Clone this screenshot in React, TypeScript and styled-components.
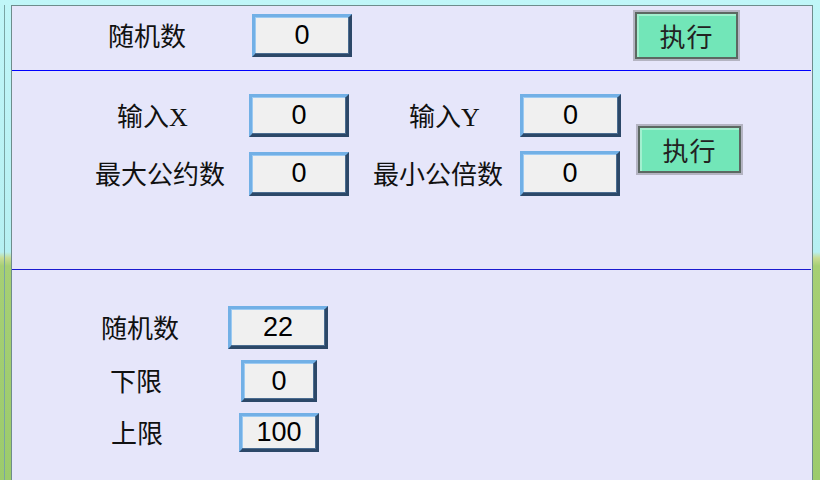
import React from "react";
import styled, { createGlobalStyle } from "styled-components";

const GlobalStyle = createGlobalStyle`
  html, body {
    margin: 0;
    padding: 0;
    overflow: hidden;
  }
  body {
    font-family: "Liberation Serif", "Noto Sans CJK SC", serif;
  }
`;

export default function App() {
  return (
    <>
      <GlobalStyle />
      <Page>
        <Frame>
          <Panel>
            <TopSection>
              <LabelCell $w={240} $pad={96}>随机数</LabelCell>
              <ValueBox $w={100} $h={43}>0</ValueBox>
              <RunButton $left={281}>执行</RunButton>
            </TopSection>
            <Divider $color="#0000ff" />

            <MathSection>
              <Rows>
                <Row>
                  <LabelCell $w={237} $pad={105}>输入X</LabelCell>
                  <ValueBox $w={100} $h={43}>0</ValueBox>
                  <LabelCell $w={171} $pad={60}>输入Y</LabelCell>
                  <ValueBox $w={101} $h={43}>0</ValueBox>
                </Row>
                <Row>
                  <LabelCell $w={237} $pad={83}>最大公约数</LabelCell>
                  <ValueBox $w={100} $h={44}>0</ValueBox>
                  <LabelCell $w={171} $pad={24}>最小公倍数</LabelCell>
                  <ValueBox $w={100} $h={45}>0</ValueBox>
                </Row>
              </Rows>
              <RunButton $left={15} $top={30}>执行</RunButton>
            </MathSection>
            <Divider $color="#1a1ad0" />

            <RangeSection>
              <Row>
                <LabelCell $w={216} $pad={89}>随机数</LabelCell>
                <ValueBox $w={100} $h={43}>22</ValueBox>
              </Row>
              <Row>
                <LabelCell $w={229} $pad={98}>下限</LabelCell>
                <ValueBox $w={76} $h={42}>0</ValueBox>
              </Row>
              <Row>
                <LabelCell $w={227} $pad={99}>上限</LabelCell>
                <ValueBox $w={80} $h={39}>100</ValueBox>
              </Row>
            </RangeSection>
          </Panel>
        </Frame>
      </Page>
    </>
  );
}

const Page = styled.div`
  width: 820px;
  height: 480px;
  box-sizing: border-box;
  padding: 5px 7px 0 4px;
  display: flex;
  background: linear-gradient(
    to bottom,
    #c0f6f8 0,
    #b6f0f2 252px,
    #c8dc94 258px,
    #a6cf74 266px,
    #9ccb6c 480px
  );
`;

const Frame = styled.div`
  flex: 1;
  display: flex;
  border-left: 1px solid #7aa4a4;
  padding-left: 6px;
`;

const Panel = styled.div`
  flex: 1;
  display: flex;
  flex-direction: column;
  background: #e6e6fa;
  border: 1px solid #6e8c8c;
  border-bottom: none;
`;

const TopSection = styled.div`
  height: 64px;
  box-sizing: border-box;
  padding-bottom: 5px;
  display: flex;
  align-items: center;
`;

const MathSection = styled.div`
  height: 198px;
  box-sizing: border-box;
  padding-top: 23px;
  display: flex;
  align-items: flex-start;
`;

const RangeSection = styled.div`
  flex: 1;
  padding-top: 36px;
  display: flex;
  flex-direction: column;
  gap: 11px;
`;

const Rows = styled.div`
  display: flex;
  flex-direction: column;
  gap: 14px;
`;

const Row = styled.div`
  display: flex;
  align-items: center;
`;

const Divider = styled.div<{ $color: string }>`
  height: 1px;
  background: ${({ $color }) => $color};
  margin-right: 1px;
`;

const LabelCell = styled.div<{ $w: number; $pad: number }>`
  width: ${({ $w }) => $w}px;
  padding-left: ${({ $pad }) => $pad}px;
  padding-top: 4px;
  box-sizing: border-box;
  font-size: 26px;
  line-height: 30px;
  color: #111;
  white-space: nowrap;
`;

const ValueBox = styled.div<{ $w: number; $h: number }>`
  width: ${({ $w }) => $w}px;
  height: ${({ $h }) => $h}px;
  box-sizing: border-box;
  display: flex;
  align-items: center;
  justify-content: center;
  background: #f0f0f0;
  border: 3px solid;
  border-color: #72b0e6 #2c4868 #2c4868 #72b0e6;
  box-shadow: inset -1px -1px 0 #4a6c90, inset 1px 1px 0 #9ccaf2;
  font-family: "Liberation Sans", Arial, sans-serif;
  font-size: 27px;
  color: #000;
`;

const RunButton = styled.div<{ $left: number; $top?: number }>`
  width: 107px;
  height: 51px;
  margin-left: ${({ $left }) => $left}px;
  margin-top: ${({ $top }) => $top ?? 0}px;
  box-sizing: border-box;
  display: flex;
  align-items: center;
  justify-content: center;
  background: #72e6b8;
  border: 2px solid #b4b4c2;
  box-shadow: inset 0 0 0 2px #5c6862, inset 1px 1px 0 3px #a2f0cf;
  font-size: 26px;
  color: #222;
  letter-spacing: 1px;
`;
